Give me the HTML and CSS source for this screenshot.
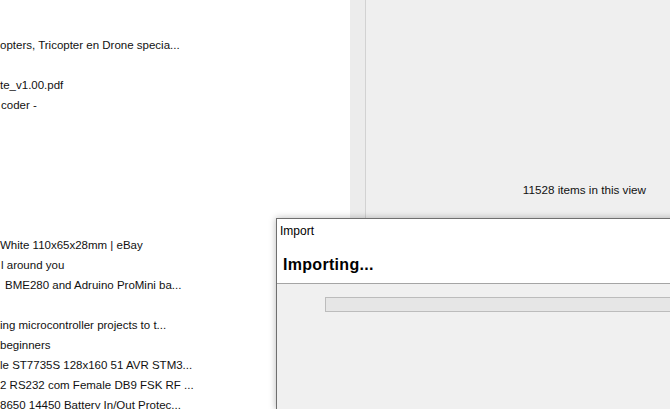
FILE: index.html
```html
<!DOCTYPE html>
<html>
<head>
<meta charset="utf-8">
<link rel="stylesheet" href="styles.css">
</head>
<body>
<div class="app">
  <div class="list">
    <div class="row">opters, Tricopter en Drone specia...</div>
    <div class="row"></div>
    <div class="row">te_v1.00.pdf</div>
    <div class="row shift1">coder -</div>
    <div class="row"></div>
    <div class="row"></div>
    <div class="row"></div>
    <div class="row"></div>
    <div class="row"></div>
    <div class="row"></div>
    <div class="row">White 110x65x28mm | eBay</div>
    <div class="row shift1">l around you</div>
    <div class="row shift5">BME280 and Adruino ProMini ba...</div>
    <div class="row"></div>
    <div class="row">ing microcontroller projects to t...</div>
    <div class="row">beginners</div>
    <div class="row">le ST7735S 128x160 51 AVR STM3...</div>
    <div class="row">2 RS232 com Female DB9 FSK RF ...</div>
    <div class="row">8650 14450 Battery In/Out Protec...</div>
  </div>
  <div class="side">
    <div class="strip"></div>
    <div class="pane">
      <div class="status">11528 items in this view</div>
    </div>
  </div>
</div>
<div class="dialog">
  <div class="dlg-head">
    <div class="dlg-title">Import</div>
    <div class="dlg-heading">Importing...</div>
  </div>
  <div class="dlg-body">
    <div class="progress"></div>
  </div>
</div>
</body>
</html>
```
FILE: styles.css
```css
html, body {
  margin: 0;
  padding: 0;
}
body {
  width: 670px;
  height: 409px;
  overflow: hidden;
  position: relative;
  font-family: "Liberation Sans", Arial, sans-serif;
  font-size: 12px;
  color: #000;
  background: #f0f0f0;
}
.app {
  display: flex;
  height: 409px;
}
.list {
  width: 350px;
  background: #fff;
  padding-top: 35px;
  box-sizing: border-box;
  overflow: hidden;
}
.row {
  height: 20px;
  line-height: 20px;
  white-space: nowrap;
  font-size: 11.5px;
  color: #111;
}
.shift1 { padding-left: 1px; }
.shift5 { padding-left: 5px; }
.side {
  flex: 1;
  display: flex;
}
.strip {
  width: 15px;
  background: #ececec;
  border-right: 1px solid #d2d2d2;
}
.pane {
  flex: 1;
  background: #efefef;
  display: flex;
  flex-direction: column;
  align-items: flex-end;
  padding-top: 180px;
  padding-right: 24px;
}
.status {
  line-height: 20px;
  font-size: 11.7px;
  color: #111;
}
.dialog {
  position: absolute;
  left: 276px;
  top: 218px;
  width: 400px;
  height: 190px;
  border: 1px solid #6f6f6f;
  background: #f0f0f0;
  box-shadow: 0 0 7px rgba(0, 0, 0, 0.28);
}
.dlg-head {
  height: 65px;
  background: #fff;
  border-bottom: 1px solid #a5a5a5;
  box-sizing: border-box;
}
.dlg-title {
  padding-left: 3px;
  padding-top: 4px;
  line-height: 17px;
  font-size: 12px;
}
.dlg-heading {
  padding-left: 6px;
  padding-top: 15px;
  line-height: 20px;
  font-size: 16px;
  font-weight: bold;
  letter-spacing: 0.3px;
  color: #000;
}
.dlg-body {
  padding-top: 13px;
  padding-left: 48px;
}
.progress {
  height: 13px;
  background: #e6e6e6;
  border: 1px solid #bcbcbc;
}
```
